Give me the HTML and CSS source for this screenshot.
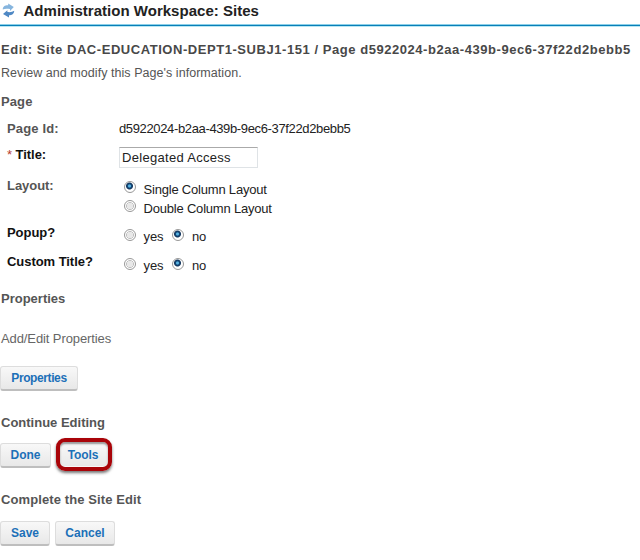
FILE: index.html
```
<!DOCTYPE html>
<html lang="en">
<head>
<meta charset="utf-8">
<title>Administration Workspace: Sites</title>
<link rel="stylesheet" href="styles.css">
</head>
<body>
<header class="tool-header">
  <svg class="reload" viewBox="0 0 13 15" aria-hidden="true">
    <path d="M.8 6.4C.6 3.6 3 2.1 6.2 2.2V.5L11.8 3.9 8 8V6C4.8 5.4 2.5 5.6.8 6.4Z" fill="#86b5de"/>
    <path d="M12.2 7.8C12.2 11 9.8 12.2 7 12.3V14.4L1 10.9 5.4 7.2V9.1C8.4 9.5 10.5 8.9 12.2 7.8Z" fill="#4f88c4"/>
  </svg>
  <h1>Administration Workspace: Sites</h1>
</header>
<main>
  <h2 class="edit-title">Edit: Site DAC-EDUCATION-DEPT1-SUBJ1-151 / Page d5922024-b2aa-439b-9ec6-37f22d2bebb5</h2>
  <p class="instruction">Review and modify this Page's information.</p>
  <form>
    <h3 class="page-heading">Page</h3>
    <div class="row row-id"><span class="label muted">Page Id:</span><span class="page-id">d5922024-b2aa-439b-9ec6-37f22d2bebb5</span></div>
    <div class="row row-title"><label class="label title-label" for="title"><span class="required">*</span> Title:</label><input class="title-input" id="title" type="text" value="Delegated Access"></div>
    <div class="row row-layout"><span class="label muted">Layout:</span>
      <div class="choices">
        <label class="choice"><input type="radio" name="layout" checked><span class="layout-name">Single Column Layout</span></label>
        <label class="choice"><input type="radio" name="layout"><span class="layout-name">Double Column Layout</span></label>
      </div>
    </div>
    <div class="row row-popup"><span class="label popup-label">Popup?</span>
      <div class="inline-choices">
        <label class="choice"><input type="radio" name="popup"><span>yes</span></label>
        <label class="choice"><input type="radio" name="popup" checked><span>no</span></label>
      </div>
    </div>
    <div class="row row-custom"><span class="label custom-label">Custom Title?</span>
      <div class="inline-choices">
        <label class="choice"><input type="radio" name="custom"><span>yes</span></label>
        <label class="choice"><input type="radio" name="custom" checked><span>no</span></label>
      </div>
    </div>
    <h3 class="properties-heading">Properties</h3>
    <p class="add-edit">Add/Edit Properties</p>
    <div class="actions"><button class="properties" type="button">Properties</button></div>
    <h3 class="continue">Continue Editing</h3>
    <div class="actions"><button class="done" type="button">Done</button><button class="tools" type="button">Tools</button></div>
    <h3 class="complete">Complete the Site Edit</h3>
    <div class="actions"><button class="save" type="button">Save</button><button class="cancel" type="button">Cancel</button></div>
  </form>
</main>
</body>
</html>
```
FILE: styles.css
```
* { box-sizing: border-box; }
body {
  margin: 0;
  background: #fff;
  color: #222;
  font: 13px/18px "Liberation Sans", Arial, sans-serif;
  white-space: nowrap;
  overflow: hidden;
}
h1, h2, h3, p { margin: 0; }
.tool-header {
  height: 27px;
  display: flex;
  align-items: flex-start;
  background: linear-gradient(#8bd0e8 0 1px, #087fb8 1px 2px, #b9e7f3 2px) bottom / 100% 3px no-repeat;
}
.reload { width: 13px; height: 15px; margin: 3px 0 0 2px; }
h1 { margin: 2px 0 0 8.5px; font-size: 15px; line-height: 18px; color: #222; letter-spacing: .02px; }
h2, h3 { font-size: 13px; line-height: 18px; color: #555; }
.edit-title { margin: 14px 0 0 1px; letter-spacing: .55px; color: #484848; }
.instruction { margin: 5px 0 0 1px; color: #555; font-size: 12.5px; letter-spacing: .05px; }
.page-heading { margin: 11px 0 0 1px; letter-spacing: .1px; }
.row { display: flex; align-items: flex-start; padding-left: 7px; }
.label { width: 112px; font-weight: bold; color: #111; letter-spacing: -.05px; }
.muted { color: #555; }
.row-id { height: 27px; margin-top: 9px; }
.row-id .label { letter-spacing: .15px; }
.page-id { letter-spacing: -.36px; }
.row-title { height: 28px; }
.title-label { margin-top: -1px; }
.required { color: #b63a2b; font-weight: normal; }
.title-input {
  width: 139px;
  height: 21px;
  margin: 0;
  padding: 0 2px;
  border: 1px solid #dfe3e6;
  border-top-color: #aaa;
  font: 13px "Liberation Sans", Arial, sans-serif;
  letter-spacing: .3px;
  color: #222;
}
.row-layout { height: 49px; padding-top: 3px; }
.row-layout .label { margin-top: -1px; }
.row-layout .label, .row-popup .label, .row-custom .label { width: 117px; }
.choices { display: grid; grid-auto-rows: 19px; padding-top: 2px; }
.choice { display: flex; align-items: flex-start; }
.choice span { margin-left: 7.5px; line-height: 19px; letter-spacing: -.1px; }
.choices .choice span { line-height: 19px; }
.choice .layout-name { letter-spacing: -.2px; }
input[type="radio"] {
  appearance: none;
  width: 12px;
  height: 12px;
  margin: 1px 0 0;
  border: 1px solid #989898;
  border-radius: 50%;
  background: radial-gradient(circle, #e8e8e8 0 3px, #bdbdbd 3.5px, #fff 4.3px);
}
input[type="radio"]:checked {
  background: radial-gradient(circle at 45% 40%, #59b4e2 0 1px, #124879 2px, #12365e 3px, #fff 4px);
}
.row-popup { height: 29px; }
.row-custom { height: 29px; }
.inline-choices { display: flex; gap: 9px; padding-top: 3px; }
.inline-choices input[type="radio"] { margin-top: 2px; }
.properties-heading { margin: 8px 0 0 1px; }
.add-edit { margin: 22px 0 0 1px; color: #666; letter-spacing: -.1px; }
.actions { display: flex; gap: 5px; height: 25px; }
button {
  height: 25px;
  padding: 0 0 1px;
  border: 1px solid #ddd;
  border-bottom: 2px solid #bebebe;
  border-radius: 3px;
  background: linear-gradient(#f8f8f8, #e8e8e8);
  color: #1c70b8;
  font: bold 12px/20px "Liberation Sans", Arial, sans-serif;
}
.add-edit + .actions { margin-top: 18px; }
.properties { width: 78px; letter-spacing: -.4px; }
.continue { margin: 23px 0 0 1px; }
.continue + .actions { margin-top: 11px; }
.done { width: 51px; }
.tools { width: 54px; position: relative; border-color: transparent; letter-spacing: -.1px; }
.tools::after {
  content: "";
  position: absolute;
  inset: -6px -3px -5px -1px;
  border: 4px solid #a90409;
  border-radius: 9px;
  box-shadow: 0 2px 3px #777, inset 0 2px 2px #999;
}
.complete { margin: 23px 0 0 1px; letter-spacing: .1px; }
.complete + .actions { margin-top: 12px; }
.save { width: 50px; }
.cancel { width: 60px; }
```
